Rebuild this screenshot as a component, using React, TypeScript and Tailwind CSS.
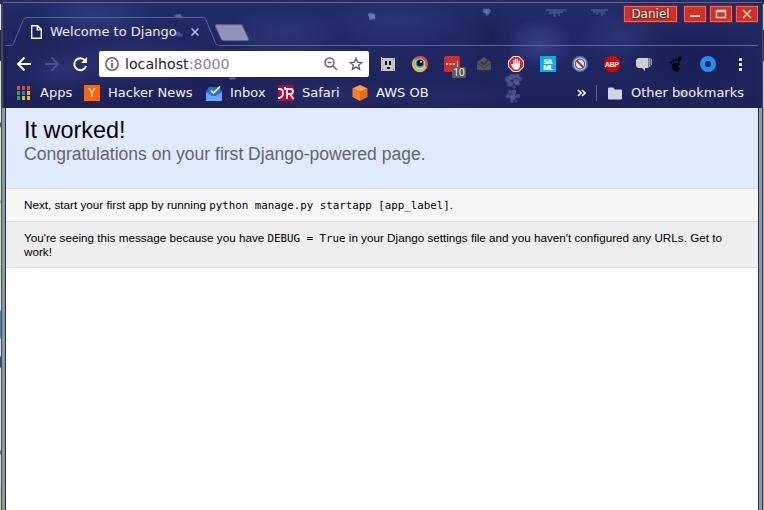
import React from "react";

const ui = "font-['DejaVu_Sans',sans-serif]";

const clouds: [number, number, number, number, string][] = [
  [95, 15, 60, 26, "#303a7e"],
  [135, 62, 80, 26, "#2c3375"],
  [60, 70, 40, 24, "#2d3476"],
  [285, 32, 60, 26, "#2d3678"],
  [395, 22, 70, 26, "#2d3678"],
  [330, 95, 80, 16, "#282e6e"],
  [540, 44, 34, 26, "#3a428b"],
  [490, 38, 24, 36, "#1a2253"],
  [620, 35, 40, 26, "#2e3576"],
  [700, 55, 75, 36, "#191d52"],
  [440, 96, 80, 16, "#272d6b"],
  [30, 40, 50, 34, "#1d2459"],
  [220, 80, 60, 24, "#1d2259"],
];

const specks: [number, number, number, number][] = [
  [370, 15, 2, 0.8], [373, 16, 2.4, 0.8], [371, 18, 2, 0.7], [374, 18, 1.5, 0.6],
  [485, 11, 2.4, 0.6], [488, 11, 2.6, 0.6], [487, 14, 1.8, 0.5],
  [176, 16, 1.8, 0.55], [179, 16, 2.2, 0.6], [181, 17, 1.6, 0.45],
  [178, 34, 2.4, 0.45], [181, 35, 1.8, 0.4],
  [231, 78, 2, 0.5], [234, 78, 1.7, 0.5],
  [508, 79, 3, 0.4], [512, 77, 3, 0.45], [517, 76, 2.5, 0.45], [520, 79, 2.3, 0.35], [516, 82, 3, 0.45], [510, 84, 3, 0.4], [518, 84, 2, 0.3], [514, 87, 1.8, 0.3],
  [510, 92, 2, 0.4], [514, 92, 2.4, 0.45], [508, 96, 2.3, 0.4], [513, 97, 3, 0.5], [518, 96, 2.2, 0.4], [512, 101, 2, 0.4], [516, 101, 1.7, 0.3],
  [681, 92, 2.6, 0.35], [684, 94, 2.4, 0.35], [681, 96, 2, 0.3],
];

function Starfield() {
  return (
    <svg className="absolute inset-0" width="764" height="108" aria-hidden="true">
      <defs>
        <linearGradient id="sky" x1="0" y1="0" x2="0" y2="1">
          <stop offset="0" stopColor="#222b68" />
          <stop offset="0.5" stopColor="#202762" />
          <stop offset="1" stopColor="#1d2157" />
        </linearGradient>
        {clouds.map((cloud, i) => (
          <radialGradient key={i} id={`cloud${i}`}>
            <stop offset="0" stopColor={cloud[4]} stopOpacity="0.9" />
            <stop offset="0.5" stopColor={cloud[4]} stopOpacity="0.5" />
            <stop offset="1" stopColor={cloud[4]} stopOpacity="0" />
          </radialGradient>
        ))}
      </defs>
      <rect width="764" height="108" fill="url(#sky)" />
      {clouds.map(([cx, cy, rx, ry], i) => <ellipse key={i} cx={cx} cy={cy} rx={rx} ry={ry} fill={`url(#cloud${i})`} />)}
      <g fill="#7d84c4">
        {specks.map(([cx, cy, r, opacity], i) => <circle key={i} cx={cx} cy={cy} r={r} opacity={opacity} />)}
        <path d="M546 9h20v2h-3v2h-3v3h-2v-2h-2v3h-3v-3h-4v-3h-3z" opacity=".35" />
        <path d="M591 9h17v2h-3v3h-2v2h-2v-3h-3v2h-2v-2h-3v-2h-2z" opacity=".35" />
      </g>
    </svg>
  );
}

function WindowButton({ children }: { children: React.ReactNode }) {
  return (
    <div className="flex h-[16px] w-[22px] items-center justify-center border border-[#e7695e] bg-[#d23025] shadow-[0_0_0_1px_#771f35]">
      <svg width="16" height="12" fill="none" stroke="#ffdcd8" strokeWidth="1.4">{children}</svg>
    </div>
  );
}

function TabStrip() {
  return (
    <div className="relative flex h-[43px] items-start">
      <svg className="absolute left-0 top-0" width="764" height="43" fill="none" stroke="#5d6394">
        <path d="M5 42.5H10.500Q12.500 42.500 13.500 40.500L23 17.500Q24 14.500 27 14.500H202Q205 14.500 206 17L215.500 40Q216.500 42.500 218.500 42.500H758" />
      </svg>
      <div className="flex h-[43px] w-[211px] items-center pl-[31px] pt-[15px]">
        <svg width="11" height="14" viewBox="0 0 11 14" fill="none" stroke="#f4f4fa" strokeWidth="1.4">
          <path d="M.7.7h6l3.600 3.700v8.900H.7zM6.300.7v4.200h4" />
        </svg>
        <span className="ml-2 w-[140px] whitespace-nowrap text-[13px] leading-4 text-[#eeeefa]">Welcome to Django</span>
        <svg width="10" height="10" viewBox="0 0 10 10" fill="none" stroke="#b7b9d4" strokeWidth="1.6"><path d="M1.500 1.500l7 7m0-7l-7 7" /></svg>
      </div>
      <svg className="ml-[3px] mt-[21px]" width="37" height="19">
        <path d="M2.500 .8H27Q28 .8 28.500 2L34.500 15Q35 16.500 33 16.500H10Q8 16.500 7.300 15L1.500 2.500Q1 .8 2.500 .8Z" fill="#9292b8" stroke="#62659a" strokeWidth="1" />
      </svg>
      <div className="ml-auto mr-[6px] mt-[3px] flex gap-[4px]">
        <div className="mr-[3px] flex h-[16px] w-[53px] items-center justify-center border border-[#e7695e] bg-[#d23025] text-[12px] leading-none text-[#fff0ee] shadow-[0_0_0_1px_#771f35] [text-shadow:0_1px_2px_#222,0_0_2px_#333]">Daniel</div>
        <WindowButton><path d="M3 8H13" strokeWidth="2" /></WindowButton>
        <WindowButton><path d="M3.500 2.500h9v7h-9zM3.500 3.500h9" /></WindowButton>
        <WindowButton><path d="M4 2l8 8m0-8l-8 8" /></WindowButton>
      </div>
    </div>
  );
}

const extensions: React.ReactNode[] = [
  <g key="outlet">
    <path d="M1 3V1h4v1h10v13H1z" fill="#c5c7c7" />
    <path d="M2 1h3v1H2z" fill="#242424" />
    <path d="M5 5h2v4H5zM9 5h2v4H9zM7 11h3v2H7z" fill="#151515" />
    <path d="M2 3h1v1H2zM13 3h1v1h-1zM2 13h1v1H2zM13 13h1v1h-1z" fill="#777" />
  </g>,
  <g key="eye">
    <circle cx="8" cy="8" r="8" fill="#e94c3d" />
    <path d="M2 3a8 8 0 0 0 4 13 8 8 0 0 0 9-5L8 8z" fill="#f3ae4d" />
    <path d="M3 3a7 7 0 0 0 5 11l2-8z" fill="#67bb55" />
    <circle cx="8" cy="8" r="5.500" fill="#a2dfc4" />
    <circle cx="8" cy="7.500" r="4.300" fill="#359bb3" />
    <circle cx="8" cy="7" r="3.200" fill="#101527" />
    <circle cx="9" cy="5.800" r="1" fill="white" />
  </g>,
  <g key="pass">
    <rect width="16" height="16" rx="1.500" fill="#d52b27" />
    <path d="M2 7h2v2H2zM5.500 7h2v2h-2zM9 7h2v2H9zM13 5h1v6h-1z" fill="#ffe5e0" />
    <rect x="8" y="11" width="14" height="11" rx="1" fill="#5b5b5b" />
    <text x="15" y="20.200" textAnchor="middle" fill="white" fontSize="10" fontFamily="Open Sans">10</text>
  </g>,
  <g key="inbox" fill="#535358">
    <path d="M1 6l7-5 7 5v8H1z" />
    <path d="M1 7l7 5 7-5" fill="none" stroke="#38394d" />
    <path d="M5 6l2.500 2.500L13 3" fill="none" stroke="#303451" strokeWidth="1.500" />
  </g>,
  <g key="hand">
    <path d="M5 0h6l5 5v6l-5 5H5l-5-5V5z" fill="#efe9ed" />
    <path d="M5.500 1h5L15 5.500v5L10.500 15h-5L1 10.500v-5z" fill="#e32224" />
    <path d="M5 12L3 8.500l1-.8 1.300 1.300V4h1.100v3.500h.5V2.800h1.300v4.500h.5V3.200h1.300v4.500h.5V4.800H12V10l-1.500 3.500H6.500z" fill="white" />
  </g>,
  <g key="saml">
    <rect width="16" height="16" fill="#05adf2" />
    <g fill="white" fontFamily="Open Sans" fontWeight="800" fontSize="7.500" textAnchor="middle"><text x="8" y="7.500" textLength="9">SA</text><text x="8" y="14" textLength="10">ML</text></g>
  </g>,
  <g key="block">
    <circle cx="8" cy="8" r="7" fill="white" stroke="#438bd0" strokeWidth="1.800" />
    <circle cx="8" cy="8" r="4.800" fill="#e8e8ef" stroke="#8c4659" strokeWidth="1.300" />
    <path d="M4.500 4.500l7 7" stroke="#943c42" strokeWidth="2" />
  </g>,
  <g key="abp">
    <path d="M5 0h6l5 5v6l-5 5H5l-5-5V5z" fill="#cd0804" />
    <text x="1" y="11" fill="white" fontFamily="Liberation Sans" fontWeight="bold" fontSize="8" textLength="14" lengthAdjust="spacingAndGlyphs">ABP</text>
  </g>,
  <g key="chat">
    <path d="M2 2h10.500v10H9v3l-3-3H2L0 10V4z" fill="#cfced1" />
    <path d="M13 2h1.500v9H13zM15 3h1v6h-1z" fill="#9999ab" />
    <text x="6.300" y="9.800" textAnchor="middle" fontSize="7" fontWeight="bold" fontFamily="DejaVu Sans" fill="white" stroke="#888" strokeWidth=".25">a</text>
  </g>,
  <g key="foot" fill="#03030b">
    <ellipse cx="11.500" cy="3" rx="2" ry="2.700" transform="rotate(25 11.500 3)" />
    <ellipse cx="7.700" cy="3.400" rx="1.100" ry="1.600" />
    <ellipse cx="5.200" cy="4.800" rx="1" ry="1.500" transform="rotate(-20 5.200 4.800)" />
    <ellipse cx="3.300" cy="6.500" rx=".9" ry="1.200" transform="rotate(-30 3.300 6.500)" />
    <path d="M4 9c1-2 4-2.500 6-2.400 3 .2 2.500 3.200-.5 3.300 0 1.200 2.500 1.200 2 3.600-.5 2-3 2.700-4.800 1.700C4.600 14.200 3 11 4 9z" />
  </g>,
  <circle key="ring" cx="8" cy="8" r="5.500" fill="none" stroke="#218ff1" strokeWidth="5" />,
  <g key="menu" fill="#f2f2fc"><rect x="7" y="2" width="3" height="3" rx=".7" /><rect x="7" y="7" width="3" height="3" rx=".7" /><rect x="7" y="12" width="3" height="3" rx=".7" /></g>,
];

function Toolbar() {
  return (
    <div className="flex h-[36px] items-center pl-[16px]">
      <svg width="16" height="16" fill="none" stroke="#fff" strokeWidth="2"><path d="M15 8H2m6.500-6.500L2 8l6.500 6.500" /></svg>
      <svg className="ml-[12px]" width="16" height="16" fill="none" stroke="#4e548b" strokeWidth="2"><path d="M1 8h13M7.500 1.500L14 8l-6.500 6.500" /></svg>
      <svg className="ml-[12px]" width="16" height="16" fill="none" stroke="#fff" strokeWidth="2"><path d="M13 4.500A6 6 0 1 0 14 10" /><path d="M15 1v6H9z" fill="#fff" stroke="none" /></svg>
      <div className="ml-[11px] flex h-[26px] w-[270px] items-center rounded-[2px] bg-white pl-[6px] pr-[6px]">
        <svg width="14" height="14" fill="none" stroke="#606060" strokeWidth="1.500"><circle cx="7" cy="7" r="6.200" /><path d="M7 6v5M7 3v1.700" strokeWidth="1.700" /></svg>
        <span className="ml-[6px] text-[14.2px] leading-5 text-[#242424]">localhost<span className="text-[#858585]">:8000</span></span>
        <svg className="ml-auto" width="14" height="14" fill="none" stroke="#666" strokeWidth="1.500"><circle cx="5.500" cy="5.500" r="4.500" /><path d="M9 9l4 4M3.500 5.500h4" /></svg>
        <svg className="ml-[11px]" width="14" height="14" viewBox="0 0 14 14" fill="none" stroke="#5d5d5d" strokeWidth="1.300"><path d="M7 1.300l1.600 3.900 4.200.3-3.200 2.700 1 4.100L7 10.100l-3.600 2.200 1-4.100-3.200-2.700 4.200-.3z" /></svg>
      </div>
      <div className="ml-[3px] flex">
        {extensions.map((item, index) => (
          <div key={index} className="flex w-8 justify-center"><svg className="overflow-visible" width="16" height="16">{item}</svg></div>
        ))}
      </div>
    </div>
  );
}

function BookmarkBar() {
  const colors = ["#ef4238", "#ef4238", "#ef4238", "#27a565", "#2587e6", "#f6b518", "#27a565", "#f6b518", "#f6b518"];
  return (
    <div className="flex h-[22px] items-center pl-[16px] text-[13px] leading-4 text-[#f2f2fb]">
      <div className="flex w-[68px] items-center gap-2"><svg width="16" height="16">{colors.map((color, i) => <rect key={i} x={1 + (i % 3) * 5} y={1 + Math.floor(i / 3) * 5} width="3" height="4" fill={color} />)}</svg>Apps</div>
      <div className="flex w-[122px] items-center gap-2 whitespace-nowrap"><span className="flex size-4 items-center justify-center bg-[#ff6500] text-[12px]">Y</span>Hacker News</div>
      <div className="flex w-[72px] items-center gap-2"><svg width="16" height="16"><path d="M0 6l3-4h10l3 4v9H0z" fill="#2a65c9" /><path d="M2 4h12v7H2z" fill="#2f70d4" /><path d="M0 7l6 4h4l6-4v9H0z" fill="#60a9ff" /><path d="M5 5.500l2.500 2.500L14 1.500" fill="none" stroke="#fff" strokeWidth="1.700" /></svg>Inbox</div>
      <div className="flex w-[74px] items-center gap-2"><svg width="16" height="16"><rect width="16" height="16" fill="#bd0036" /><path d="M0 4h1.500Q5 4 5 8T1.500 13H0M9 14V4h3.500Q15 4 15 6.500T12 9H9m3 0l3.500 5M7 2v3" fill="none" stroke="#fff" strokeWidth="1.800" /></svg>Safari</div>
      <div className="flex items-center gap-2 whitespace-nowrap"><svg width="16" height="16"><path d="M8 0l7.500 3.500L8 7 .5 3.500z" fill="#ffa33e" /><path d="M.5 3.500L8 7v9L.5 12z" fill="#f68521" /><path d="M15.500 3.500L8 7v9l7.500-4z" fill="#e9681c" /></svg>AWS OB</div>
      <svg className="ml-auto" width="10" height="8" fill="none" stroke="#fff" strokeWidth="1.700"><path d="M1 1l3 3-3 3m4-6l3 3-3 3" /></svg>
      <div className="ml-[9px] h-4 w-px bg-[#5f638f]" />
      <svg className="ml-[11px]" width="15" height="13"><path d="M0 1.500Q0 .5 1 .5h4l2 2h6q1 0 1 1v8q0 1-1 1H1q-1 0-1-1z" fill="#d2d4e3" /></svg>
      <span className="ml-[8px] mr-[20px] whitespace-nowrap">Other bookmarks</span>
    </div>
  );
}

function Code({ children }: { children: React.ReactNode }) {
  return <code className="font-['DejaVu_Sans_Mono',monospace] text-[10.8px] leading-[10px]">{children}</code>;
}

export default function App() {
  return (
    <div className={`${ui} h-[510px] w-[764px] overflow-hidden bg-white`}>
      <header className="relative h-[108px] overflow-hidden">
        <Starfield />
        <div className="relative">
          <div className="ml-[3px] mr-[2px] h-[3px] border-b border-[#686870]" />
          <TabStrip />
          <Toolbar />
          <BookmarkBar />
        </div>
        <svg className="absolute inset-0" width="764" height="108">
          <path d="M0 4h1v26H0z" fill="#e6e6e4" /><path d="M0 31h1v30H0z" fill="#252840" /><path d="M0 61h1v47H0z" fill="#d3dfba" />
          <path d="M1 4h2v104H1z" fill="#454957" /><path d="M3 4h1v104H3z" fill="#222a68" /><path d="M5 46h1v62H5z" fill="#151943" />
          <path d="M758 4h1v104h-1z" fill="#202568" /><path d="M762 4h1v104h-1z" fill="#494950" /><path d="M763 4h1v26h-1zM763 61h1v47h-1z" fill="#bfc0c0" /><path d="M763 30h1v31h-1z" fill="#37373c" />
        </svg>
      </header>
      <div className="flex h-[402px]">
        <div className="flex w-[6px] shrink-0">
          <div className="w-px bg-[linear-gradient(180deg,#e5e5e5_0_14px,#555_15px_18px,#dae4ba_20px_92px,#58aaa0_93px,#d7e2bd_96px_177px,#e4e4e4_178px_202px,#3790bf_203px_230px,#d9dce0_231px_248px,#2d467b_249px_259px,#e3e3e3_260px_342px,#796860_343px_346px,#dadada_347px_378px,#cbd7a5_379px)]" />
          <div className="w-px bg-[#415056]" /><div className="w-[3px] bg-[#899ba1]" /><div className="w-px bg-[#24286d]" />
        </div>
        <main className="w-[752px] shrink-0 bg-white font-['Liberation_Sans',Arial,sans-serif] text-[11.7px] leading-[14px] text-black">
          <section className="h-[81px] border-b border-[#ddd] bg-[#e0ebff] pl-[18px] pt-[9px]">
            <h1 className="text-[23.4px] leading-[27px]">It worked!</h1>
            <h2 className="text-[17.55px] leading-[20px] text-[#666]">Congratulations on your first Django-powered page.</h2>
          </section>
          <section className="h-[33px] border-b border-[#ddd] bg-[#f6f6f6] px-[18px] pt-[9px]">
            Next, start your first app by running <Code>python manage.py startapp [app_label]</Code>.
          </section>
          <section className="h-[46px] border-b border-[#ddd] bg-[#eee] px-[18px] pt-[9px]">
            You're seeing this message because you have <Code>DEBUG = True</Code> in your Django settings file and you haven't configured any URLs. Get to work!
          </section>
        </main>
        <div className="flex w-[6px] shrink-0"><div className="w-px bg-[#24286d]" /><div className="w-[3px] bg-[#899ba1]" /><div className="w-px bg-[#35424a]" /><div className="w-px bg-[#aaa]" /></div>
      </div>
    </div>
  );
}
